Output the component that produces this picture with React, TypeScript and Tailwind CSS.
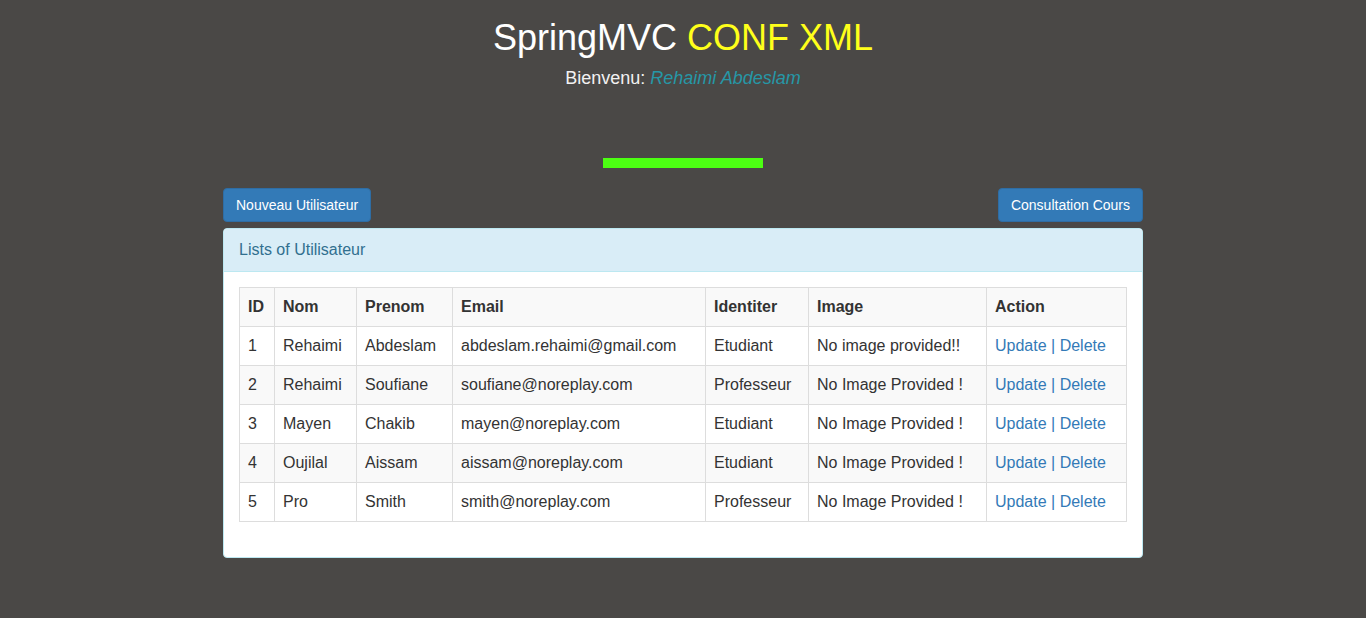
import React from "react"

type Row = {
  id: number
  nom: string
  prenom: string
  email: string
  identiter: string
  image: string
}

const rows: Row[] = [
  { id: 1, nom: "Rehaimi", prenom: "Abdeslam", email: "abdeslam.rehaimi@gmail.com", identiter: "Etudiant", image: "No image provided!!" },
  { id: 2, nom: "Rehaimi", prenom: "Soufiane", email: "soufiane@noreplay.com", identiter: "Professeur", image: "No Image Provided !" },
  { id: 3, nom: "Mayen", prenom: "Chakib", email: "mayen@noreplay.com", identiter: "Etudiant", image: "No Image Provided !" },
  { id: 4, nom: "Oujilal", prenom: "Aissam", email: "aissam@noreplay.com", identiter: "Etudiant", image: "No Image Provided !" },
  { id: 5, nom: "Pro", prenom: "Smith", email: "smith@noreplay.com", identiter: "Professeur", image: "No Image Provided !" },
]

const cell = "border border-[#dddddd] px-[8px] py-[8px] leading-[22px] align-top text-left"

export default function App() {
  return (
    <div
      className="min-h-screen bg-[#4a4846] text-[#333333] pb-10"
      style={{ fontFamily: '"Liberation Sans", Arial, Helvetica, sans-serif' }}
    >
      {/* header */}
      <div className="text-center">
        <h1 className="pt-[18px] text-[36px] leading-[40px] text-white">
          SpringMVC <span className="text-[#ffff1a]">CONF XML</span>
        </h1>
        <p className="mt-[7px] text-[18px] leading-[26px] text-[#f2f2f2]">
          Bienvenu: <i className="text-[#2697a6]">Rehaimi Abdeslam</i>
        </p>
      </div>

      {/* green bar */}
      <div className="mx-auto mt-[67px] h-[10px] w-[160px] bg-[#4cff12]" />

      <div className="mx-auto mt-[20px] w-[920px]">
        <div className="flex justify-between">
          <button className="h-[34px] rounded-[4px] border border-[#2e6da4] bg-[#337ab7] px-[12px] text-[14px] text-white">
            Nouveau Utilisateur
          </button>
          <button className="h-[34px] rounded-[4px] border border-[#2e6da4] bg-[#337ab7] px-[12px] text-[14px] text-white">
            Consultation Cours
          </button>
        </div>

        {/* panel */}
        <div className="mt-[6px] rounded-[4px] border border-[#bce8f1] bg-white">
          <div className="rounded-t-[3px] border-b border-[#bce8f1] bg-[#d9edf7] px-[15px] py-[10px] text-[16px] leading-[22px] text-[#31708f]">
            Lists of Utilisateur
          </div>
          <div className="p-[15px]">
            <table className="mb-[20px] w-full table-fixed border-collapse text-[16px]">
              <colgroup>
                <col className="w-[35px]" />
                <col className="w-[82px]" />
                <col className="w-[96px]" />
                <col className="w-[253px]" />
                <col className="w-[103px]" />
                <col className="w-[178px]" />
                <col />
              </colgroup>
              <tbody>
                <tr className="bg-[#f9f9f9]">
                  <th className={`${cell} font-bold`}>ID</th>
                  <th className={`${cell} font-bold`}>Nom</th>
                  <th className={`${cell} font-bold`}>Prenom</th>
                  <th className={`${cell} font-bold`}>Email</th>
                  <th className={`${cell} font-bold`}>Identiter</th>
                  <th className={`${cell} font-bold`}>Image</th>
                  <th className={`${cell} font-bold`}>Action</th>
                </tr>
                {rows.map((r, i) => (
                  <tr key={r.id} className={i % 2 === 1 ? "bg-[#f9f9f9]" : "bg-white"}>
                    <td className={cell}>{r.id}</td>
                    <td className={cell}>{r.nom}</td>
                    <td className={cell}>{r.prenom}</td>
                    <td className={cell}>{r.email}</td>
                    <td className={cell}>{r.identiter}</td>
                    <td className={cell}>{r.image}</td>
                    <td className={`${cell} text-[#337ab7]`}>
                      <a href="#">Update</a> | <a href="#">Delete</a>
                    </td>
                  </tr>
                ))}
              </tbody>
            </table>
          </div>
        </div>
      </div>
    </div>
  )
}
